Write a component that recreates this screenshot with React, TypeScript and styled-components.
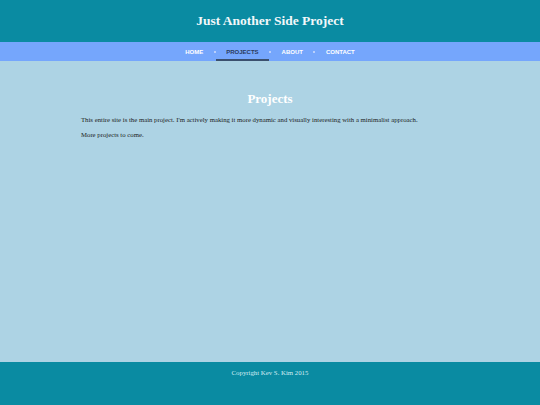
import React from "react";
import styled, { createGlobalStyle } from "styled-components";

const Global = createGlobalStyle`
  html, body { margin: 0; padding: 0; height: 100%; }
  body { font-family: "Liberation Serif", "Times New Roman", serif; }
  #root { height: 100%; }
`;

const Page = styled.div`
  display: flex;
  flex-direction: column;
  min-height: 100vh;
  background: #add3e4;
`;

const Header = styled.header`
  height: 42px;
  background: #0a8ba2;
  display: flex;
  align-items: center;
  justify-content: center;
`;

const Title = styled.h1`
  margin: 0;
  font-family: "Liberation Serif", "Times New Roman", serif;
  font-weight: bold;
  font-size: 13.5px;
  color: #f2f8fa;
`;

const Nav = styled.nav`
  height: 19px;
  background: #75a6fc;
  display: flex;
  justify-content: center;
  align-items: stretch;
`;

const NavLink = styled.a<{ $active?: boolean }>`
  display: flex;
  align-items: center;
  padding: 0 10px;
  box-sizing: border-box;
  font-family: "Liberation Sans", Arial, sans-serif;
  font-weight: bold;
  font-size: 6px;
  text-transform: uppercase;
  text-decoration: none;
  color: ${(p) => (p.$active ? "#2b3b5c" : "#ffffff")};
  border-bottom: 2px solid ${(p) => (p.$active ? "#3b506e" : "transparent")};
  padding-top: 2px;
`;

const Sep = styled.span`
  width: 3px;
  display: flex;
  align-items: center;
  justify-content: center;
  &::before {
    content: "";
    width: 2px;
    height: 2px;
    background: #b9cffb;
  }
`;

const Main = styled.main`
  flex: 1;
  width: 70%;
  margin: 0 auto;
  padding-top: 30px;
`;

const Heading = styled.h2`
  margin: 0 0 9px;
  text-align: center;
  font-family: "Liberation Serif", "Times New Roman", serif;
  font-weight: bold;
  font-size: 13px;
  color: #ffffff;
`;

const Para = styled.p`
  margin: 0 0 7px;
  font-size: 6.75px;
  line-height: 8px;
  color: #1c1c1c;
`;

const Footer = styled.footer`
  height: 43px;
  background: #0a8ba2;
  display: flex;
  justify-content: center;
  padding-top: 7px;
  box-sizing: border-box;
`;

const Copy = styled.span`
  font-size: 6.8px;
  color: #d4edf4;
`;

const items = ["Home", "Projects", "About", "Contact"];

export default function App() {
  return (
    <>
      <Global />
      <Page>
        <Header>
          <Title>Just Another Side Project</Title>
        </Header>
        <Nav>
          {items.map((it, i) => (
            <React.Fragment key={it}>
              {i > 0 && <Sep />}
              <NavLink href="#" $active={it === "Projects"}>
                {it}
              </NavLink>
            </React.Fragment>
          ))}
        </Nav>
        <Main>
          <Heading>Projects</Heading>
          <Para>
            This entire site is the main project. I'm actively making it more dynamic and visually interesting with a minimalist approach.
          </Para>
          <Para>More projects to come.</Para>
        </Main>
        <Footer>
          <Copy>Copyright Kev S. Kim 2015</Copy>
        </Footer>
      </Page>
    </>
  );
}
